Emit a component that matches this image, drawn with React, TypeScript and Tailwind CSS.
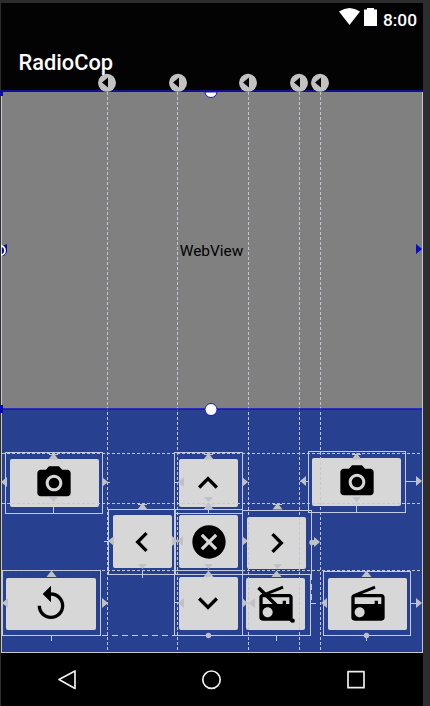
import React from "react";
import {
  MdPhotoCamera,
  MdKeyboardArrowUp,
  MdKeyboardArrowDown,
  MdKeyboardArrowLeft,
  MdKeyboardArrowRight,
  MdCancel,
  MdReplay,
  MdRadio,
} from "react-icons/md";

type WidgetProps = { box: string; inner: string; children: React.ReactNode };

/* One image button on the constraint canvas: selection outline plus the button face. */
function Widget({ box, inner, children }: WidgetProps) {
  return (
    <div className={`absolute border border-[#c3cbe3] ${box}`}>
      <div className={`flex items-center justify-center rounded-[2px] bg-[#d7d7d7] text-black ${inner}`}>
        {children}
      </div>
    </div>
  );
}

function RadioOff() {
  return (
    <span className="relative block size-10">
      <MdRadio className="size-10" />
      <svg className="absolute inset-0 size-10" viewBox="0 0 24 24">
        <path d="M1.500 2.300L21.700 22" stroke="#000" strokeWidth="2.100" />
        <circle cx="22" cy="22" r="1.300" />
      </svg>
    </span>
  );
}

const columns = [107.5, 177.5, 248.5, 299.5, 320.5];
const rows = [453.5, 503.5, 570.5];

const up = [[53, 453], [208, 453], [356, 453], [142, 503], [208, 503], [277, 503], [51, 570.5], [208, 570.5], [276, 570.5], [366, 570.5]];
const down = [[53, 497], [208, 497], [356, 497], [142, 564], [208, 564], [277, 564]];
const left = [[1, 482], [178, 482], [300, 481], [108, 541], [177, 541], [2, 603], [178, 603], [249, 603], [321, 603]];
const right = [[108, 482], [248, 482], [422, 481], [178, 541], [248, 541], [320, 542], [108, 603], [248, 603], [422, 603]];

/* Guidelines, constraint arrows and resize handles, drawn in screen coordinates. */
function Overlay() {
  return (
    <svg className="pointer-events-none absolute left-0 top-0" width="430" height="706" viewBox="0 0 430 706">
      <path d="M1.500 91V653M422.500 91V653M1 652.500H423" stroke="#c5c8cf" fill="none" />
      <g stroke="#c3c7d2" strokeDasharray="3 2">
        {columns.map((x) => <path key={x} d={`M${x} 92V652`} />)}
        {rows.map((y) => <path key={y} d={`M2 ${y}H422`} />)}
      </g>
      <path d="M102 635.500H174M311.500 574V603" stroke="#c3cbe3" strokeDasharray="6 4" />
      <path
        d="M53.500 507V514M356.500 502V512M142.500 570V578M208.500 507V514M51.500 635V641M276.500 635V641M366.500 635V641M102 482.500H110M300 481.500H308M406 481.500H416M104 541.500H112M174 482.500H180M174 602.500H180M311 603.500H316M410 603.500H417M311 542.500H315M138 504.500H147M204 504.500H213M273 504.500H282M49 454.500H58M204 454.500H213M352 454.500H361"
        stroke="#c3cbe3"
      />
      <g fill="#c0c1c4">
        {up.map(([x, y], i) => <path key={i} d={`M${x + 0.5} ${y}l5 6.500h-10z`} />)}
        {down.map(([x, y], i) => <path key={i} d={`M${x + 0.5} ${y + 5}l4.500-5h-9z`} />)}
        {left.map(([x, y], i) => <path key={i} d={`M${x} ${y}l6-5v10z`} />)}
        {right.map(([x, y], i) => <path key={i} d={`M${x} ${y}l-6-5v10z`} />)}
        <circle cx="208.500" cy="635.500" r="2.700" />
        <circle cx="366.500" cy="635.500" r="2.700" />
        <circle cx="312" cy="542.500" r="2.700" />
      </g>
      <path d="M1 91H423" stroke="#101090" strokeWidth="2" />
      <path d="M1 409H422" stroke="#1212cc" strokeWidth="1.300" />
      <path d="M0 91h3v5h-3zM0 405h3v8h-3zM2 246l5-2v8l-3 4h-2z" fill="#0909b4" />
      <path d="M1 246a4 4.500 0 0 1 0 9" fill="none" stroke="#fff" strokeWidth="1.800" />
      <path d="M416 244l6 5-6 5z" fill="#0909d0" />
      <path d="M205 92a6 5.500 0 0 0 12 0z" fill="#fff" stroke="#1515b5" strokeWidth="1" />
      <circle cx="211" cy="409.500" r="6" fill="#fff" stroke="#1717d5" strokeWidth="1" />
      {[107, 178, 248, 299, 320].map((x) => (
        <g key={x}>
          <circle cx={x} cy="82.800" r="9" fill="#c2c2c2" />
          <path d={`M${x - 5} 82.500l6-5v10z`} fill="#000" />
        </g>
      ))}
    </svg>
  );
}

export default function App() {
  return (
    <div className="relative h-[706px] w-[430px] overflow-hidden bg-[#2d2d2f] pl-px pt-[3px] font-[Roboto,sans-serif]">
      <div className="flex h-[703px] w-[422px] flex-col bg-[#030303]">
        <div className="flex h-8 shrink-0 items-start justify-end pr-[6px] pt-[5px] text-white">
          <svg className="mr-1" width="21" height="17" viewBox="0 0 21 17">
            <path d="M0 3.500Q10.500-3.500 21 3.500L10.500 17z" fill="currentColor" />
          </svg>
          <svg className="mr-[6px]" width="13" height="18" viewBox="0 0 13 18">
            <path d="M0 1.500h3V0h7v1.500h3V18H0z" fill="currentColor" />
          </svg>
          <span className="pt-[2px] text-[17.300px] font-medium leading-5">8:00</span>
        </div>
        <div className="flex h-14 shrink-0 items-center pl-[17.500px] text-[21.800px] font-medium text-white">
          <span>RadioCop</span>
        </div>
        <div className="flex h-[318px] shrink-0 items-center justify-center bg-[#808080] pr-px pt-[3px] text-[15.400px] text-black">
          WebView
        </div>
        <div className="h-[244px] shrink-0 bg-[#27408f]" />
        <div className="flex grow items-center bg-black">
          <svg className="ml-[56px]" width="22" height="22" viewBox="0 0 22 22" fill="none" stroke="#eee" strokeWidth="1.700" strokeLinejoin="round">
            <path d="M2 10.500L18 2v17.500z" />
          </svg>
          <svg className="ml-[122px]" width="22" height="22" viewBox="0 0 22 22" fill="none" stroke="#eee" strokeWidth="1.700">
            <circle cx="10.500" cy="10.700" r="8.700" />
          </svg>
          <svg className="ml-[123px]" width="22" height="22" viewBox="0 0 22 22" fill="none" stroke="#eee" strokeWidth="1.700" strokeLinejoin="round">
            <rect x="2" y="2.700" width="16" height="16" />
          </svg>
        </div>
      </div>

      <Widget box="left-[5px] top-[452px] h-[62px] w-[98px]" inner="ml-1 mt-1.5 h-[48px] w-[89px] pr-px">
        <MdPhotoCamera className="size-10" />
      </Widget>
      <Widget box="left-[174px] top-[452px] h-[62px] w-[69px]" inner="ml-1 mt-1.5 h-[48px] w-[59px] pr-px">
        <MdKeyboardArrowUp className="size-10" />
      </Widget>
      <Widget box="left-[308px] top-[451px] h-[62px] w-[98px]" inner="ml-[3px] mt-1.5 h-[48px] w-[89px] pb-px">
        <MdPhotoCamera className="size-10" />
      </Widget>
      <Widget box="left-[108px] top-[509px] h-[66px] w-[68px]" inner="ml-1 mt-[5px] h-[53px] w-[59px] pr-px">
        <MdKeyboardArrowLeft className="size-10" />
      </Widget>
      <Widget box="left-[174px] top-[509px] h-[66px] w-[69px]" inner="ml-1 mt-[5px] h-[53px] w-[59px]">
        <MdCancel className="size-10" />
      </Widget>
      <Widget box="left-[242px] top-[510px] h-[65px] w-[70px]" inner="ml-1 mt-1.5 h-[52px] w-[59px]">
        <MdKeyboardArrowRight className="size-10" />
      </Widget>
      <Widget box="left-[2px] top-[570px] h-[66px] w-[99px]" inner="ml-[3px] mt-[7px] h-[52px] w-[90px]">
        <MdReplay className="size-10" />
      </Widget>
      <Widget box="left-[174px] top-[570px] h-[66px] w-[69px]" inner="ml-1 mt-1.5 h-[53px] w-[59px] pb-px pr-px">
        <MdKeyboardArrowDown className="size-10" />
      </Widget>
      <Widget box="left-[242px] top-[574px] h-[62px] w-[69px]" inner="ml-[3px] mt-[3px] h-[52px] w-[59px]">
        <RadioOff />
      </Widget>
      <Widget box="left-[323px] top-[571px] h-[65px] w-[88px]" inner="ml-1 mt-1.5 h-[52px] w-[79px]">
        <MdRadio className="size-10" />
      </Widget>
      <Overlay />
    </div>
  );
}
